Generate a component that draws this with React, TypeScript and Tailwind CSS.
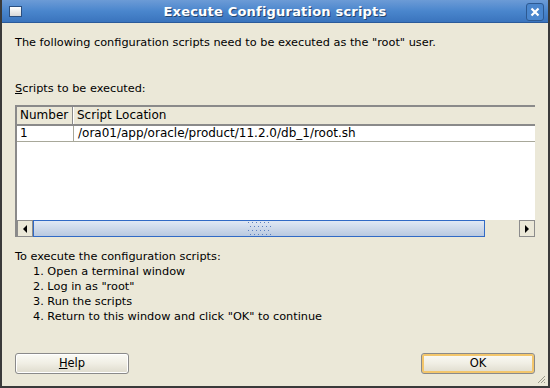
import React from "react";

// ── Title bar ────────────────────────────────────────────────────────────────

function TitleBar() {
  return (
    <div className="relative h-[23px] shrink-0 flex items-center justify-center bg-gradient-to-b from-[#6c9bd6] via-[#4a86cd] to-[#3a74bd] border-b border-[#2a5a9a]">
      {/* window menu icon */}
      <div className="absolute left-[7px] top-[6px] w-[13px] h-[11px] border border-[#2b4f80] bg-gradient-to-b from-white to-[#d8d8d8]" />
      <span className="text-[13px] font-bold text-white [text-shadow:1px_1px_0_#25466f] tracking-[0.2px]">
        Execute Configuration scripts
      </span>
      {/* close button */}
      <div className="absolute right-[4px] top-[3px] w-[18px] h-[18px] rounded-[3px] border border-[#2d5991] bg-[#4a86cd] flex items-center justify-center">
        <svg width="10" height="10" viewBox="0 0 10 10">
          <path d="M1.5 1.5 L8.5 8.5 M8.5 1.5 L1.5 8.5" stroke="white" strokeWidth="2.2" />
        </svg>
      </div>
    </div>
  );
}

// ── Scrollbar ────────────────────────────────────────────────────────────────

function Arrow({ dir }: { dir: "left" | "right" }) {
  return (
    <div className="w-[16px] h-[17px] shrink-0 bg-[#ebe8d8] border border-[#8c8c8c] flex items-center justify-center">
      <svg width="6" height="8" viewBox="0 0 6 8">
        {dir === "left" ? <path d="M5 0 L1 4 L5 8 Z" fill="black" /> : <path d="M1 0 L5 4 L1 8 Z" fill="black" />}
      </svg>
    </div>
  );
}

function HScrollbar() {
  const dots = [];
  for (let r = 0; r < 4; r++) {
    for (let c = 0; c < 6; c++) {
      dots.push(
        <span
          key={`${r}-${c}`}
          className="absolute w-[1px] h-[1px] bg-[#5a7fc0]"
          style={{ left: c * 4 + (r % 2) * 2, top: r * 4 }}
        />,
      );
    }
  }
  return (
    <div className="flex h-[17px] bg-[#ebe8d8]">
      <Arrow dir="left" />
      <div className="relative w-[452px] h-[17px] border border-[#316ac5] bg-gradient-to-b from-[#e0e8f4] to-[#b9c9e0] flex items-center justify-center">
        <div className="relative w-[23px] h-[13px]">{dots}</div>
      </div>
      <div className="flex-1" />
      <Arrow dir="right" />
    </div>
  );
}

// ── Buttons ──────────────────────────────────────────────────────────────────

function Button({ children, focused }: { children: React.ReactNode; focused?: boolean }) {
  return (
    <div
      className={
        "w-[114px] h-[21px] rounded-[3px] border border-[#8a8a8a] bg-gradient-to-b from-[#fbfbf6] via-[#f0eee4] to-[#dedbcd] flex items-center justify-center text-[11.5px] text-black " +
        (focused ? "shadow-[inset_0_0_0_2px_#f3c66b]" : "shadow-[inset_0_0_0_1px_#ffffff]")
      }
    >
      {children}
    </div>
  );
}

// ── Main ─────────────────────────────────────────────────────────────────────

export default function App() {
  const steps = [
    "1. Open a terminal window",
    '2. Log in as "root"',
    "3. Run the scripts",
    '4. Return to this window and click "OK" to continue',
  ];

  return (
    <div className="w-[550px] h-[388px] flex flex-col bg-[#ebe8d8] border-x-2 border-b-2 border-[#3a3a3a] font-['DejaVu_Sans',sans-serif] text-[11.3px] text-black leading-[15px] overflow-hidden">
      <TitleBar />

      <div className="relative flex-1 flex flex-col px-[13px]">
        <p className="mt-[12px]">The following configuration scripts need to be executed as the "root" user.</p>

        <p className="mt-[31px]">
          <span className="underline">S</span>cripts to be executed:
        </p>

        {/* table */}
        <div className="mt-[9px] w-[520px] h-[132px] border-t-2 border-l-2 border-[#8a8a8a] bg-white flex flex-col text-[12px]">
          <div className="flex h-[19px] items-center bg-[#ebe8d8] border-b-2 border-[#8a8a8a]">
            <div className="w-[56px] h-full flex items-center pl-[3px] border-r border-[#8a8a8a]">Number</div>
            <div className="flex-1 h-full flex items-center pl-[3px] border-l border-white">Script Location</div>
          </div>
          <div className="flex h-[16px] items-center border-b border-[#a8a89a]">
            <div className="w-[56px] pl-[3px]">1</div>
            <div className="flex-1 h-full pl-[4px] border-l border-[#a8a89a]">/ora01/app/oracle/product/11.2.0/db_1/root.sh</div>
          </div>
          <div className="flex-1" />
          <HScrollbar />
        </div>

        <div className="mt-[12px] flex flex-col">
          <p>To execute the configuration scripts:</p>
          {steps.map((s) => (
            <p key={s} className="pl-[18px]">
              {s}
            </p>
          ))}
        </div>

        <div className="mt-auto mb-[12px] flex justify-between">
          <Button>
            <span className="underline">H</span>elp
          </Button>
          <Button focused>OK</Button>
        </div>

        {/* resize grip */}
        <svg className="absolute right-[2px] bottom-[2px]" width="10" height="10" viewBox="0 0 10 10">
          <path d="M9 2 L2 9 M9 5 L5 9 M9 8 L8 9" stroke="#9a9a8a" strokeWidth="1" />
        </svg>
      </div>
    </div>
  );
}
